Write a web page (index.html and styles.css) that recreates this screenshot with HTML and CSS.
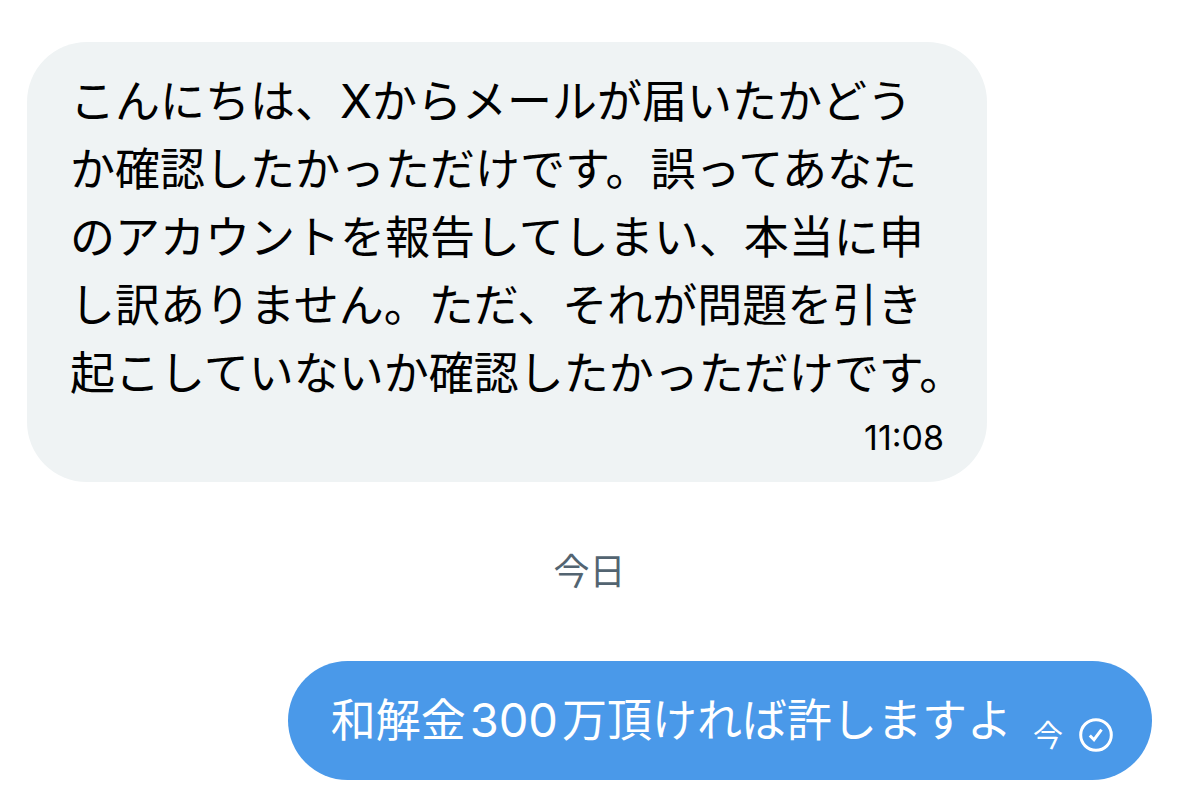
FILE: index.html
```html
<!DOCTYPE html>
<html lang="ja">
<head>
    <meta charset="UTF-8">
    <meta name="viewport" content="width=device-width, initial-scale=1.0">
    <title>メッセージ</title>
    <link rel="stylesheet" href="styles.css">
</head>
<body>
    <main class="chat">
        <!-- Message reçu -->
        <div class="message received">
            <p class="text">こんにちは、<span class="latin">X</span>からメールが届いたかどう<br>か確認したかっただけです。誤ってあなた<br>のアカウントを報告してしまい、本当に申<br>し訳ありません。ただ、それが問題を引き<br>起こしていないか確認したかっただけです。</p>
            <time class="time">11:08</time>
        </div>

        <div class="day">今日</div>

        <!-- Message envoyé -->
        <div class="message sent">
            <p class="text">和解金<span class="latin amount">300</span>万頂ければ許しますよ</p>
            <span class="status">
                <span class="now">今</span>
                <svg class="check" viewBox="0 0 34 34" role="img" aria-label="送信済み">
                    <circle cx="17" cy="17" r="15.300"/>
                    <path d="M10.800 17.500l4.200 4.200 7.500-10"/>
                </svg>
            </span>
        </div>
    </main>
</body>
</html>
```

FILE: styles.css
```css
* {
    margin: 0;
    padding: 0;
    box-sizing: border-box;
}

body {
    font-family: Inter, "Noto Sans CJK JP", sans-serif;
    background-color: #fff;
    color: #000;
}

.chat {
    display: flex;
    flex-direction: column;
    padding: 42px 27px 18px;
}

.message {
    display: flex;
    border-radius: 60px;
}

.text {
    font-size: 45px;
    line-height: 68px;
    white-space: nowrap;
}

.latin {
    font-size: 47px;
    line-height: 1;
}

.amount {
    margin: 0 4px;
}

.received {
    flex-direction: column;
    align-self: flex-start;
    width: 960px;
    max-width: 100%;
    padding: 26px 43px 20px;
    background-color: #eff3f4;
}

.time {
    align-self: flex-end;
    margin-top: 6px;
    font-size: 34px;
    line-height: 48px;
}

.day {
    margin: 62px 0 61px;
    font-size: 36px;
    line-height: 56px;
    text-align: center;
    color: #536471;
}

.sent {
    align-self: flex-end;
    align-items: center;
    gap: 21px;
    padding: 26px 39px 25px 43px;
    background-color: #4a99e9;
    color: #fff;
}

.status {
    display: flex;
    align-items: center;
    gap: 16px;
    padding-top: 28px;
    font-size: 30px;
    line-height: 40px;
}

.check {
    width: 34px;
    height: 34px;
    fill: none;
    stroke: #fff;
    stroke-width: 3;
}
```
